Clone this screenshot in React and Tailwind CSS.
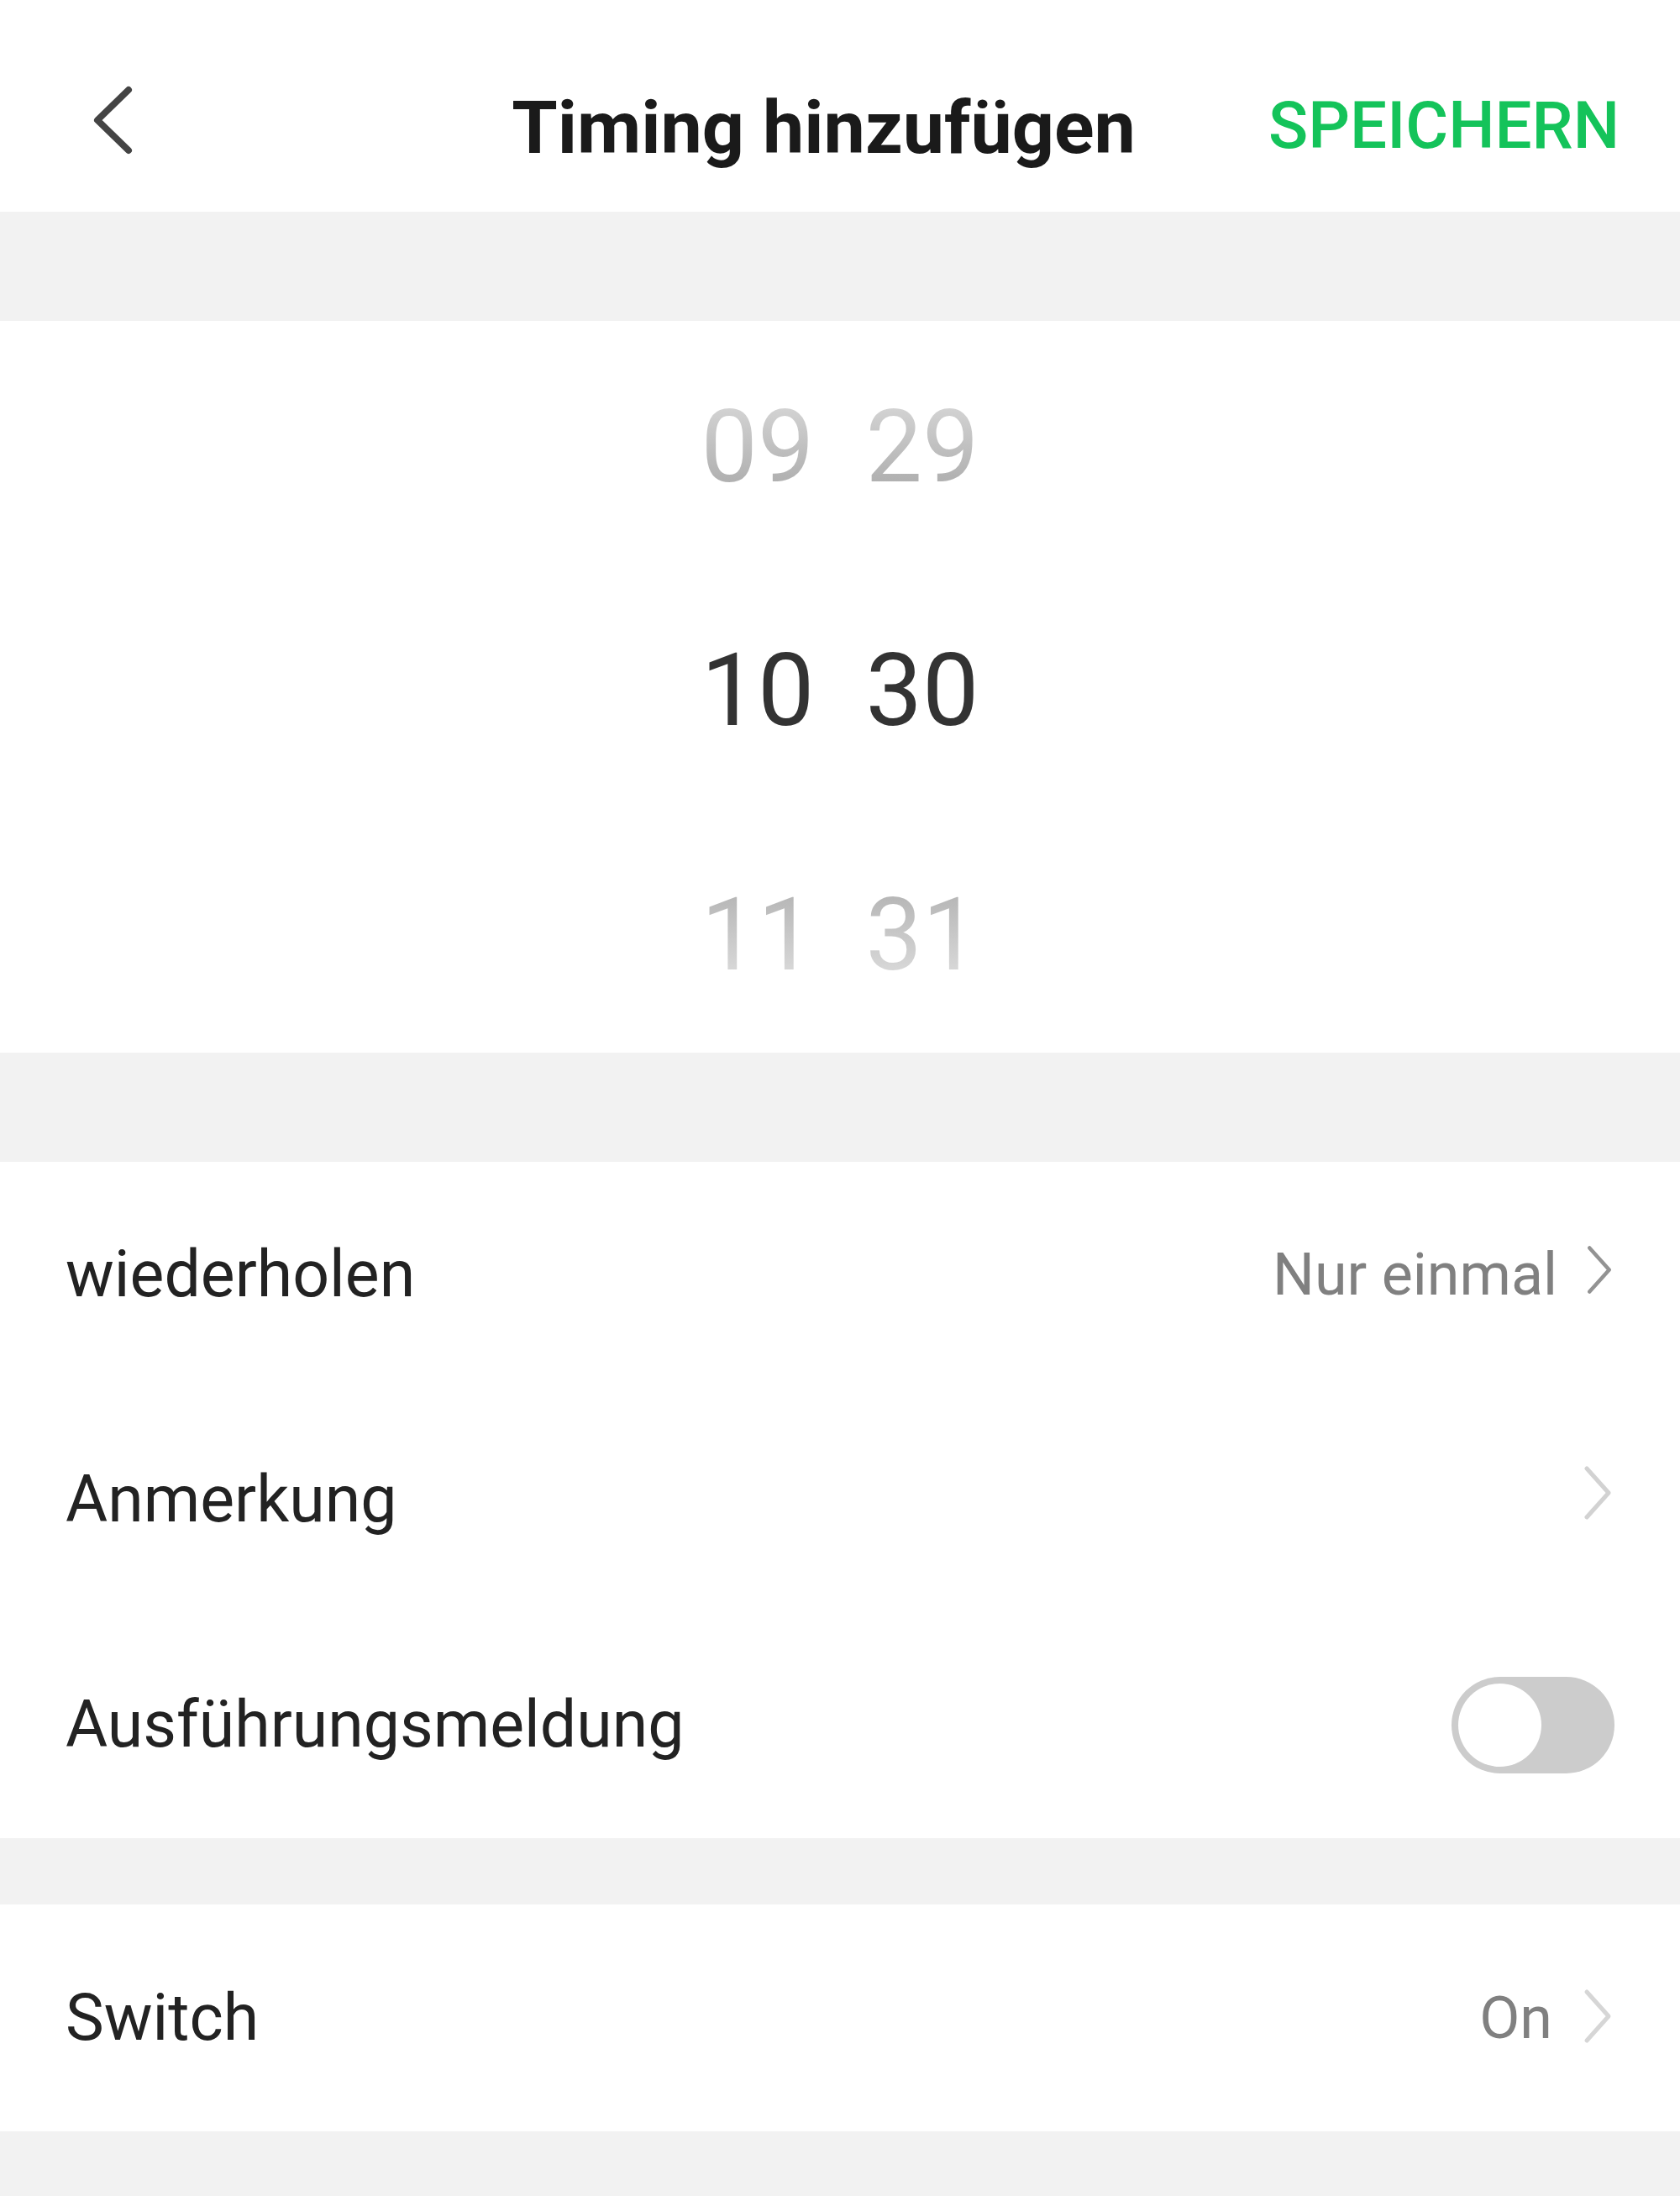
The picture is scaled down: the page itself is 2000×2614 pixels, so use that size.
import React from 'react';

function Chevron({ color, className }) {
  return (
    <svg viewBox="0 0 40 70" className={className} fill="none">
      <polyline points="7,6 33,35 7,64" stroke={color} strokeWidth="5" strokeLinecap="round" strokeLinejoin="round" />
    </svg>
  );
}

function Row({ label, height, children }) {
  return (
    <div className={`${height} flex items-center justify-between pl-[78px] pr-[78px]`}>
      <span className="text-[77px] leading-none text-[#222]">{label}</span>
      <div className="flex items-center">{children}</div>
    </div>
  );
}

export default function App() {
  const hours = ['09', '10', '11'];
  const minutes = ['29', '30', '31'];
  // oben/unten verblasst, Mitte dunkel
  const tones = [
    'bg-linear-to-b from-[#d8d8d8] to-[#a9a9a9] bg-clip-text text-transparent',
    'text-[#333]',
    'bg-linear-to-b from-[#b2b2b2] to-[#dedede] bg-clip-text text-transparent',
  ];

  return (
    <div className="w-[2000px] h-[2614px] bg-[#f2f2f2] flex flex-col [font-family:Roboto,'Noto_Sans',sans-serif]">
      {/* Kopfzeile */}
      <header className="h-[252px] bg-white flex items-center pt-[48px]">
        <div className="w-[447px] pl-[100px] flex items-center">
          <svg viewBox="0 0 60 90" className="w-[60px] h-[90px] mb-[14px]" fill="none">
            <polyline points="53,9 16,45 53,81" stroke="#444" strokeWidth="8" strokeLinecap="round" strokeLinejoin="round" />
          </svg>
        </div>
        <h1 className="flex-1 text-center text-[88px] font-bold leading-none text-[#1a1a1a] mt-[4px] ml-[4px]">
          Timing hinzufügen
        </h1>
        <button className="pr-[72px] text-[78px] font-medium leading-none text-[#14c35a]">
          SPEICHERN
        </button>
      </header>

      <div className="h-[130px]" />

      {/* Zeitauswahl */}
      <section className="h-[871px] bg-white grid grid-rows-3">
        {hours.map((h, i) => (
          <div key={h} className="flex items-center justify-center gap-[61px]">
            <span className={`text-[120px] leading-none mt-[10px] ${tones[i]}`}>{h}</span>
            <span className={`text-[120px] leading-none mt-[10px] ${tones[i]}`}>{minutes[i]}</span>
          </div>
        ))}
      </section>

      <div className="h-[130px]" />

      <section className="bg-white">
        <Row label="wiederholen" height="h-[268px]">
          <span className="text-[70px] leading-none text-[#808080]">Nur einmal</span>
          <Chevron color="#939393" className="w-[36px] h-[63px] ml-[32px] mb-[12px]" />
        </Row>
        <Row label="Anmerkung" height="h-[268px]">
          <Chevron color="#d2d2d2" className="w-[40px] h-[70px] mb-[16px]" />
        </Row>
        <Row label="Ausführungsmeldung" height="h-[269px]">
          <div className="w-[194px] h-[115px] rounded-full bg-[#cccccc] p-[8px] flex items-center">
            <div className="w-[99px] h-[99px] rounded-full bg-white" />
          </div>
        </Row>
      </section>

      <div className="h-[79px]" />

      <section className="bg-white">
        <Row label="Switch" height="h-[270px]">
          <span className="text-[70px] leading-none text-[#808080]">On</span>
          <Chevron color="#d6d6d6" className="w-[40px] h-[70px] ml-[34px] mb-[4px]" />
        </Row>
      </section>

      <div className="flex-1" />
    </div>
  );
}
